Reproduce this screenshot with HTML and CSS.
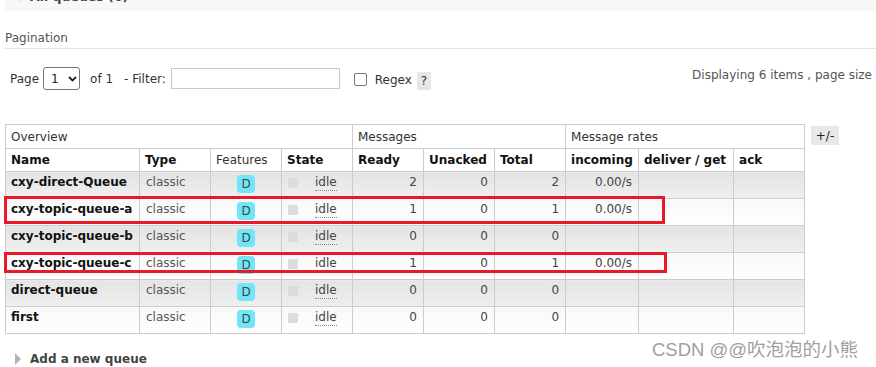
FILE: index.html
```html
<!DOCTYPE html>
<html>
<head>
<meta charset="utf-8">
<link rel="stylesheet" href="styles.css">
</head>
<body>
<div class="page">
  <div class="section-bar"><span class="tri-down"></span><span class="sec-title">All queues (6)</span></div>
  <div class="pag-title">Pagination</div>
  <div class="pag-row">
    <div class="pag-left">
      <span class="lbl-page">Page</span>
      <span class="select">1<svg class="chev" width="9" height="6" viewBox="0 0 9 6"><path d="M1 1 L4.5 4.5 L8 1" fill="none" stroke="#222" stroke-width="1.8"/></svg></span>
      <span class="lbl-of">of 1</span>
      <span class="lbl-filter">- Filter:</span>
      <span class="input"></span>
      <span class="checkbox"></span>
      <span class="lbl-regex">Regex</span>
      <span class="help">?</span>
    </div>
    <div class="pag-right">Displaying 6 items , page size</div>
  </div>
  <div class="table-wrap">
    <table class="list">
      <colgroup>
        <col class="c-name"><col class="c71"><col class="c71"><col class="c71"><col class="c71"><col class="c71"><col class="c71"><col class="c-inc"><col class="c-del"><col class="c71">
      </colgroup>
      <thead>
        <tr class="group">
          <th colspan="4">Overview</th>
          <th colspan="3">Messages</th>
          <th colspan="3">Message rates</th>
        </tr>
        <tr class="head">
          <th>Name</th><th>Type</th><th class="plain">Features</th><th>State</th><th>Ready</th><th>Unacked</th><th>Total</th><th>incoming</th><th>deliver / get</th><th>ack</th>
        </tr>
      </thead>
      <tbody>
        <tr class="alt1">
          <td class="name">cxy-direct-Queue</td><td class="type">classic</td><td class="feat"><span class="badge">D</span></td><td class="state"><span class="sq"></span><span class="idle">idle</span></td><td class="num">2</td><td class="num">0</td><td class="num">2</td><td class="num">0.00/s</td><td></td><td></td>
        </tr>
        <tr class="alt2">
          <td class="name">cxy-topic-queue-a</td><td class="type">classic</td><td class="feat"><span class="badge">D</span></td><td class="state"><span class="sq"></span><span class="idle">idle</span></td><td class="num">1</td><td class="num">0</td><td class="num">1</td><td class="num">0.00/s</td><td></td><td></td>
        </tr>
        <tr class="alt1">
          <td class="name">cxy-topic-queue-b</td><td class="type">classic</td><td class="feat"><span class="badge">D</span></td><td class="state"><span class="sq"></span><span class="idle">idle</span></td><td class="num">0</td><td class="num">0</td><td class="num">0</td><td></td><td></td><td></td>
        </tr>
        <tr class="alt2">
          <td class="name">cxy-topic-queue-c</td><td class="type">classic</td><td class="feat"><span class="badge">D</span></td><td class="state"><span class="sq"></span><span class="idle">idle</span></td><td class="num">1</td><td class="num">0</td><td class="num">1</td><td class="num">0.00/s</td><td></td><td></td>
        </tr>
        <tr class="alt1">
          <td class="name">direct-queue</td><td class="type">classic</td><td class="feat"><span class="badge">D</span></td><td class="state"><span class="sq"></span><span class="idle">idle</span></td><td class="num">0</td><td class="num">0</td><td class="num">0</td><td></td><td></td><td></td>
        </tr>
        <tr class="alt2">
          <td class="name">first</td><td class="type">classic</td><td class="feat"><span class="badge">D</span></td><td class="state"><span class="sq"></span><span class="idle">idle</span></td><td class="num">0</td><td class="num">0</td><td class="num">0</td><td></td><td></td><td></td>
        </tr>
      </tbody>
    </table>
    <span class="plusminus">+/-</span>
  </div>
  <div class="add-new"><span class="tri-right"></span><span class="add-title">Add a new queue</span></div>

  <div class="redbox box1"></div>
  <div class="redbox box2"></div>
  <div class="watermark">CSDN @@吹泡泡的小熊</div>
</div>
</body>
</html>
```

FILE: styles.css
```css
* { box-sizing: border-box; }
html, body { margin: 0; padding: 0; background: #fff; }
body {
  font-family: "DejaVu Sans", Verdana, sans-serif;
  font-size: 12px;
  color: #484848;
  overflow: hidden;
}
.page {
  position: relative;
  width: 876px;
  height: 367px;
  padding-left: 5px;
  overflow: hidden;
}

/* top collapsed section bar (scrolled partly out of view) */
.section-bar {
  margin-top: -13px;
  height: 24px;
  background: #f8f8f8;
  display: flex;
  align-items: flex-start;
  padding: 1px 0 0 10px;
}
.tri-down {
  width: 0; height: 0;
  margin-top: 8px;
  border-left: 4px solid transparent;
  border-right: 4px solid transparent;
  border-top: 5px solid #bbb;
}
.sec-title {
  margin-left: 7px;
  font-weight: bold;
  font-size: 12.5px;
  line-height: 18px;
  color: #444;
}

/* pagination */
.pag-title {
  margin-top: 20px;
  line-height: 14px;
  padding-bottom: 3px;
  border-bottom: 1px solid #e2e2e2;
  color: #555;
}
.pag-row {
  margin-top: 18px;
  display: flex;
  justify-content: space-between;
  align-items: flex-start;
  padding: 0 4px 0 5px;
  height: 23px;
}
.pag-left {
  display: flex;
  align-items: center;
  height: 23px;
  color: #333;
}
.lbl-page { margin-top: 1px; }
.select {
  margin-left: 4px;
  width: 37px;
  height: 23px;
  border: 1px solid #767676;
  border-radius: 3px;
  display: flex;
  align-items: center;
  padding-left: 7px;
  color: #222;
}
.chev { margin-left: 9px; }
.lbl-of { margin-left: 10px; }
.lbl-filter { margin-left: 11px; }
.input {
  margin-left: 5px;
  width: 169px;
  height: 21px;
  border: 1px solid #c8c8c8;
}
.checkbox {
  margin-left: 14px;
  margin-top: 2px;
  width: 13px;
  height: 13px;
  border: 1px solid #767676;
  border-radius: 2px;
}
.lbl-regex { margin-left: 8px; margin-top: 3px; }
.help {
  margin-left: 5px;
  margin-top: 4px;
  width: 14px;
  height: 18px;
  background: #e6e6e6;
  display: flex;
  align-items: center;
  justify-content: center;
  color: #333;
}
.pag-right {
  margin-top: 1px;
  color: #555;
  line-height: 14px;
}

/* table */
.table-wrap {
  margin-top: 34px;
  display: flex;
  align-items: flex-start;
}
table.list {
  border-collapse: collapse;
  table-layout: fixed;
  width: 799px;
  border: 1px solid #ccc;
}
col.c-name { width: 134px; }
col.c71 { width: 71px; }
col.c-inc { width: 73px; }
col.c-del { width: 95px; }

table.list th, table.list td {
  border: 1px solid #ccc;
  padding: 0 6px;
  text-align: left;
  white-space: nowrap;
  overflow: hidden;
}
table.list tr.group { height: 24px; }
table.list tr.group th {
  font-weight: normal;
  color: #333;
  vertical-align: middle;
  padding-left: 5px;
}
table.list tr.head { height: 23px; }
table.list tr.head th {
  font-weight: bold;
  color: #111;
  vertical-align: middle;
  padding-left: 5px;
}
table.list tr.head th.plain { font-weight: normal; color: #333; }

table.list tbody tr { height: 27px; }
table.list tbody td {
  vertical-align: top;
  padding-top: 3px;
  line-height: 14px;
}
table.list tr.alt1 td { background: linear-gradient(to bottom, #e4e4e4, #efefef); }
table.list tr.alt2 td { background: linear-gradient(to bottom, #f8f8f8, #ffffff); }

table.list td.name { font-weight: bold; color: #111; padding-left: 5px; }
table.list td.type { color: #555; }
table.list td.num { text-align: right; color: #444; }
table.list td.feat { text-align: center; }
.badge {
  display: inline-block;
  width: 18px;
  height: 18px;
  line-height: 18px;
  border-radius: 4px;
  background: #72e6f9;
  color: #444;
  text-align: center;
  vertical-align: -2px;
}
.sq {
  display: inline-block;
  width: 10px;
  height: 10px;
  background: #dddddd;
  vertical-align: -2px;
  margin-right: 17px;
}
.idle {
  color: #444;
  border-bottom: 1px dotted #888;
  padding-bottom: 1px;
}

.plusminus {
  margin-left: 6px;
  margin-top: 2px;
  width: 28px;
  height: 19px;
  background: #e8e8e8;
  display: flex;
  align-items: center;
  justify-content: center;
  color: #222;
}

/* add new */
.add-new {
  margin-top: 18px;
  display: flex;
  align-items: center;
  padding-left: 10px;
}
.tri-right {
  width: 0; height: 0;
  border-top: 6px solid transparent;
  border-bottom: 6px solid transparent;
  border-left: 6px solid #b4b4b4;
}
.add-title {
  margin-left: 9px;
  font-weight: bold;
  color: #444;
}

/* annotation overlays */
.redbox {
  position: absolute;
  border: 3px solid #e8192a;
}
.box1 { left: 4px; top: 196px; width: 661px; height: 28px; }
.box2 { left: 4px; top: 252px; width: 663px; height: 21px; }

.watermark {
  position: absolute;
  left: 652px;
  top: 335px;
  font-family: "Liberation Sans", "Noto Sans CJK SC", sans-serif;
  font-size: 18.5px;
  color: #a0a0a0;
  text-shadow: 0 0 1px #fff;
  white-space: nowrap;
}
```
